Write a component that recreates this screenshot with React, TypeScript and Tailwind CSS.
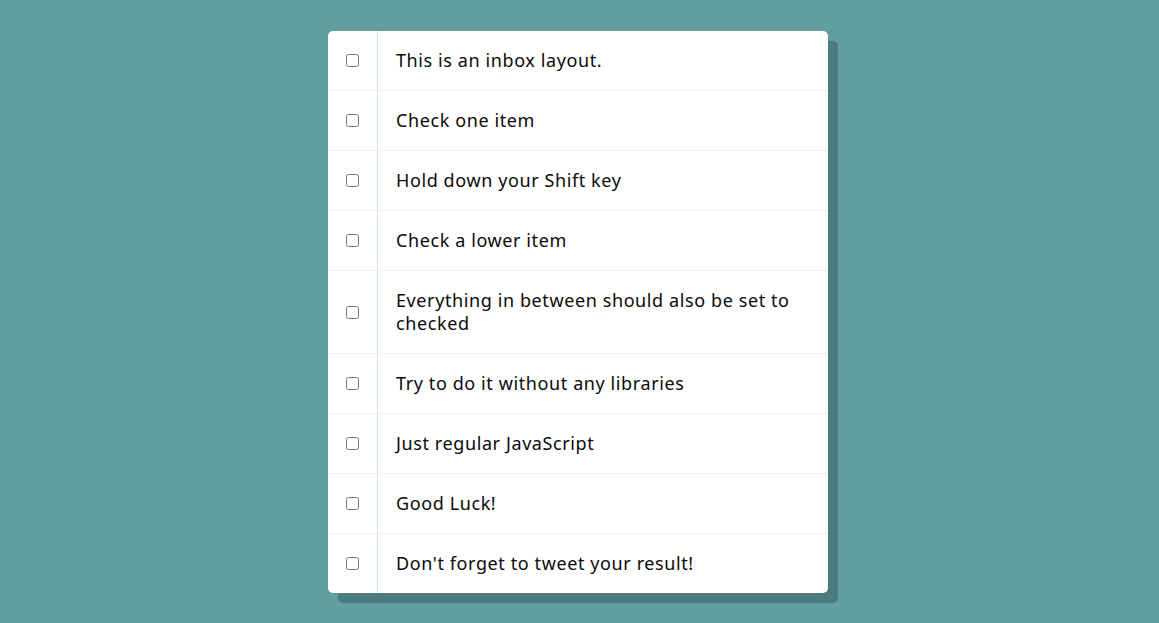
import React from "react"

const items = [
  "This is an inbox layout.",
  "Check one item",
  "Hold down your Shift key",
  "Check a lower item",
  "Everything in between should also be set to checked",
  "Try to do it without any libraries",
  "Just regular JavaScript",
  "Good Luck!",
  "Don't forget to tweet your result!",
]

export default function App() {
  return (
    <div className="min-h-screen bg-[#609e9f] pt-[31px] pb-8 pr-[3px] font-['Noto_Sans',sans-serif]">
      <div className="mx-auto w-[500px] rounded-[5px] bg-white shadow-[10px_10px_0_rgba(0,0,0,0.22)]">
        {items.map((text, i) => (
          <div
            key={i}
            className={`flex items-center ${i < items.length - 1 ? "border-b border-[#f1f1f1]" : ""}`}
          >
            <input type="checkbox" className="m-[18px] h-[13px] w-[13px] shrink-0" />
            <p className="flex-1 self-stretch border-l border-[#d1e2ff] p-[18px] text-[18px] leading-[23px] tracking-[0.6px] text-[#0a0a0a]">
              {text}
            </p>
          </div>
        ))}
      </div>
    </div>
  )
}
